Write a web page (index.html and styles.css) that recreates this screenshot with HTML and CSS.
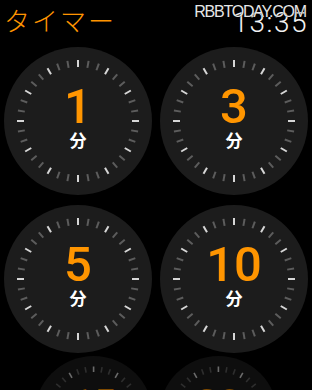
FILE: index.html
```html
<!DOCTYPE html>
<html lang="ja">
<head>
<meta charset="utf-8">
<title>タイマー</title>
<link rel="stylesheet" href="styles.css">
</head>
<body>
<svg class="defs" width="0" height="0" aria-hidden="true">
  <defs>
    <g id="dial">
      <g class="tb">
        <line x1="74" y1="13" x2="74" y2="20" transform="rotate(0 74 74)"/>
        <line x1="74" y1="13" x2="74" y2="20" transform="rotate(30 74 74)"/>
        <line x1="74" y1="13" x2="74" y2="20" transform="rotate(60 74 74)"/>
        <line x1="74" y1="13" x2="74" y2="20" transform="rotate(90 74 74)"/>
        <line x1="74" y1="13" x2="74" y2="20" transform="rotate(120 74 74)"/>
        <line x1="74" y1="13" x2="74" y2="20" transform="rotate(150 74 74)"/>
        <line x1="74" y1="13" x2="74" y2="20" transform="rotate(180 74 74)"/>
        <line x1="74" y1="13" x2="74" y2="20" transform="rotate(210 74 74)"/>
        <line x1="74" y1="13" x2="74" y2="20" transform="rotate(240 74 74)"/>
        <line x1="74" y1="13" x2="74" y2="20" transform="rotate(270 74 74)"/>
        <line x1="74" y1="13" x2="74" y2="20" transform="rotate(300 74 74)"/>
        <line x1="74" y1="13" x2="74" y2="20" transform="rotate(330 74 74)"/>
      </g>
      <g class="td">
        <line x1="74" y1="13" x2="74" y2="20" transform="rotate(10 74 74)"/>
        <line x1="74" y1="13" x2="74" y2="20" transform="rotate(20 74 74)"/>
        <line x1="74" y1="13" x2="74" y2="20" transform="rotate(40 74 74)"/>
        <line x1="74" y1="13" x2="74" y2="20" transform="rotate(50 74 74)"/>
        <line x1="74" y1="13" x2="74" y2="20" transform="rotate(70 74 74)"/>
        <line x1="74" y1="13" x2="74" y2="20" transform="rotate(80 74 74)"/>
        <line x1="74" y1="13" x2="74" y2="20" transform="rotate(100 74 74)"/>
        <line x1="74" y1="13" x2="74" y2="20" transform="rotate(110 74 74)"/>
        <line x1="74" y1="13" x2="74" y2="20" transform="rotate(130 74 74)"/>
        <line x1="74" y1="13" x2="74" y2="20" transform="rotate(140 74 74)"/>
        <line x1="74" y1="13" x2="74" y2="20" transform="rotate(160 74 74)"/>
        <line x1="74" y1="13" x2="74" y2="20" transform="rotate(170 74 74)"/>
        <line x1="74" y1="13" x2="74" y2="20" transform="rotate(190 74 74)"/>
        <line x1="74" y1="13" x2="74" y2="20" transform="rotate(200 74 74)"/>
        <line x1="74" y1="13" x2="74" y2="20" transform="rotate(220 74 74)"/>
        <line x1="74" y1="13" x2="74" y2="20" transform="rotate(230 74 74)"/>
        <line x1="74" y1="13" x2="74" y2="20" transform="rotate(250 74 74)"/>
        <line x1="74" y1="13" x2="74" y2="20" transform="rotate(260 74 74)"/>
        <line x1="74" y1="13" x2="74" y2="20" transform="rotate(280 74 74)"/>
        <line x1="74" y1="13" x2="74" y2="20" transform="rotate(290 74 74)"/>
        <line x1="74" y1="13" x2="74" y2="20" transform="rotate(310 74 74)"/>
        <line x1="74" y1="13" x2="74" y2="20" transform="rotate(320 74 74)"/>
        <line x1="74" y1="13" x2="74" y2="20" transform="rotate(340 74 74)"/>
        <line x1="74" y1="13" x2="74" y2="20" transform="rotate(350 74 74)"/>
      </g>
    </g>
  </defs>
</svg>

<header class="header">
  <h1 class="title">タイマー</h1>
  <div class="time">13:35</div>
  <div class="watermark">RBBTODAY.COM</div>
</header>

<main class="grid">
  <button class="dial">
    <svg class="ticks" viewBox="0 0 148 148"><use href="#dial"/></svg>
    <span class="num">1</span>
    <span class="unit">分</span>
  </button>
  <button class="dial">
    <svg class="ticks" viewBox="0 0 148 148"><use href="#dial"/></svg>
    <span class="num">3</span>
    <span class="unit">分</span>
  </button>
  <button class="dial">
    <svg class="ticks" viewBox="0 0 148 148"><use href="#dial"/></svg>
    <span class="num">5</span>
    <span class="unit">分</span>
  </button>
  <button class="dial">
    <svg class="ticks" viewBox="0 0 148 148"><use href="#dial"/></svg>
    <span class="num">10</span>
    <span class="unit">分</span>
  </button>
</main>

<div class="grid grid-far">
  <button class="dial">
    <svg class="ticks" viewBox="0 0 148 148"><use href="#dial"/></svg>
    <span class="num">15</span>
    <span class="unit">分</span>
  </button>
  <button class="dial">
    <svg class="ticks" viewBox="0 0 148 148"><use href="#dial"/></svg>
    <span class="num">30</span>
    <span class="unit">分</span>
  </button>
</div>
</body>
</html>
```

FILE: styles.css
```css
html, body {
  margin: 0;
  padding: 0;
  background: #000;
  width: 312px;
  height: 390px;
  overflow: hidden;
}

.defs {
  position: absolute;
  width: 0;
  height: 0;
}

.header {
  position: relative;
  display: flex;
  justify-content: space-between;
  align-items: flex-start;
  height: 47px;
  padding: 0 4px 0 4px;
  box-sizing: border-box;
}

.title {
  margin: 0;
  padding-top: 7px;
  font-family: "Noto Sans CJK JP", sans-serif;
  font-weight: 300;
  font-size: 26px;
  line-height: 26px;
  letter-spacing: 2px;
  color: #ff9500;
}

.time {
  padding-top: 9px;
  font-family: Roboto, sans-serif;
  font-weight: 300;
  font-size: 28px;
  line-height: 28px;
  letter-spacing: 1.5px;
  color: #f2f2f2;
}

.watermark {
  position: absolute;
  top: 4px;
  right: 6px;
  font-family: "Liberation Sans", sans-serif;
  font-size: 16px;
  line-height: 16px;
  letter-spacing: -1.2px;
  color: #e6e6e6;
  text-shadow: 0 0 1px #000;
}

.grid {
  display: grid;
  grid-template-columns: 148px 147px;
  column-gap: 8px;
  row-gap: 10px;
  padding: 0 5px 0 4px;
}

.grid-far {
  margin-top: 3px;
  transform: scale(0.8);
  transform-origin: top center;
  opacity: 0.5;
}

.dial {
  position: relative;
  width: 148px;
  height: 148px;
  margin: 0;
  padding: 35px 0 0 0;
  border: none;
  border-radius: 50%;
  background: #1c1c1c;
  display: flex;
  flex-direction: column;
  align-items: center;
  box-sizing: border-box;
}

.ticks {
  position: absolute;
  left: 0;
  top: 0;
  width: 148px;
  height: 148px;
}

.tb line {
  stroke: #d6d6d6;
  stroke-width: 2;
}

.td line {
  stroke: #5c5c5c;
  stroke-width: 2;
}

.num {
  position: relative;
  font-family: Roboto, sans-serif;
  font-weight: 500;
  font-size: 49px;
  line-height: 49px;
  color: #ff9500;
}

.unit {
  position: relative;
  font-family: "Noto Sans CJK JP", sans-serif;
  font-weight: 700;
  font-size: 17px;
  line-height: 17px;
  color: #fff;
}
```
